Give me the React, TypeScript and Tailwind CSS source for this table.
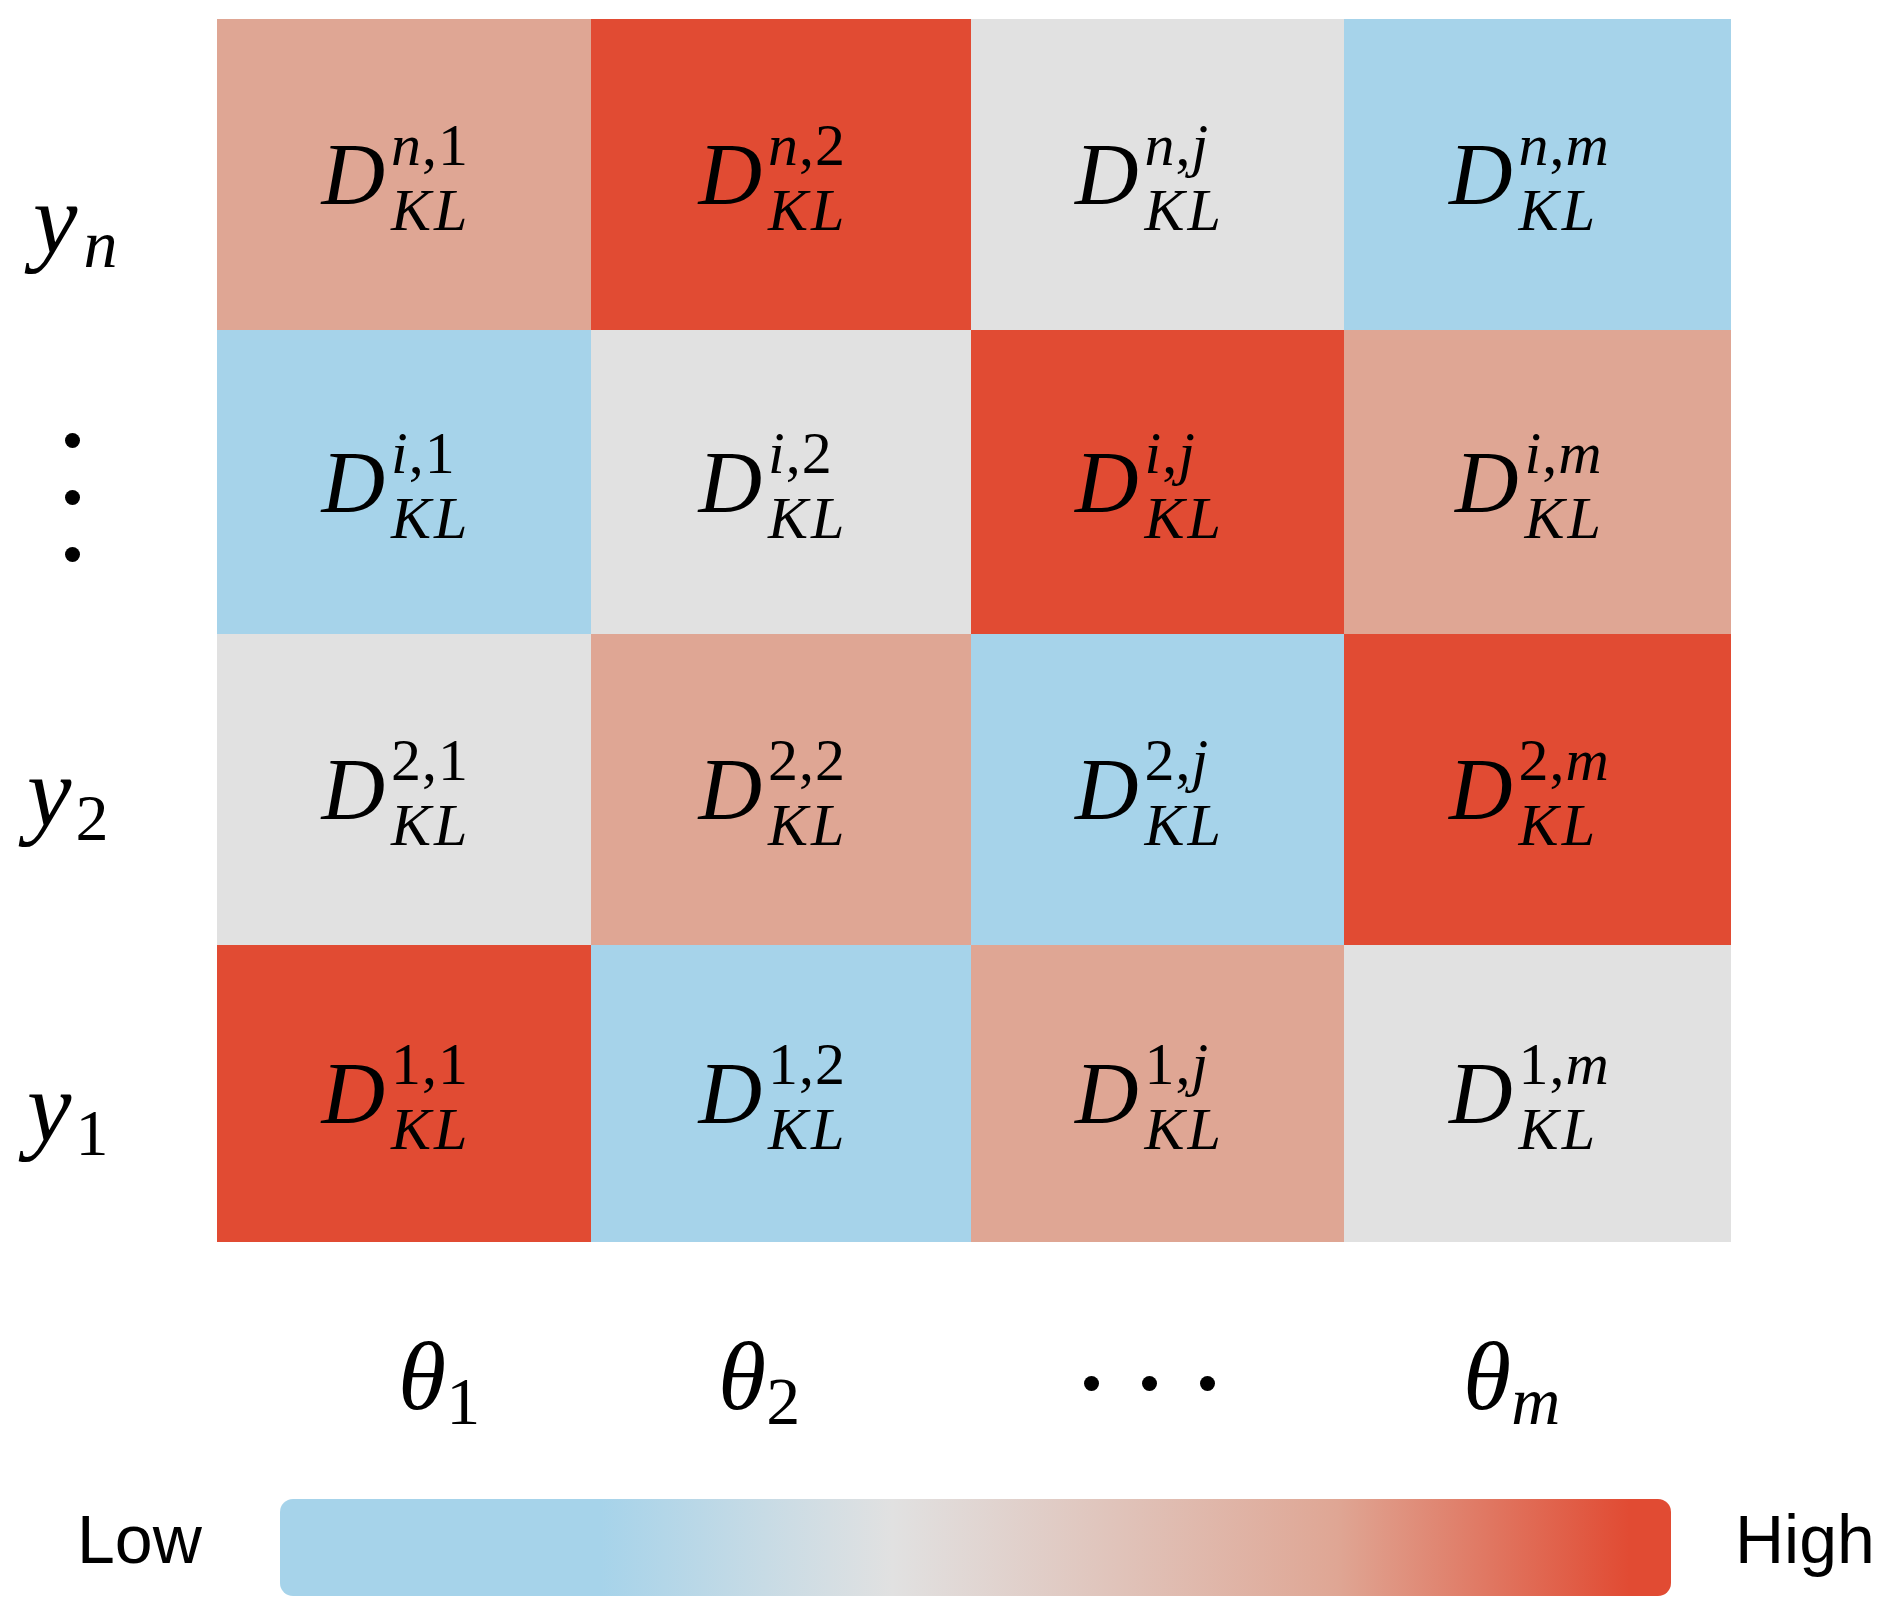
const RED = 'bg-[#e14b33]';
const SALMON = 'bg-[#dfa694]';
const GRAY = 'bg-[#e1e1e1]';
const BLUE = 'bg-[#a6d3ea]';

// heatmap rows, top (n) to bottom (1)
const rows = [
  { key: 'n', colors: [SALMON, RED, GRAY, BLUE] },
  { key: 'i', colors: [BLUE, GRAY, RED, SALMON] },
  { key: '2', colors: [GRAY, SALMON, BLUE, RED] },
  { key: '1', colors: [RED, BLUE, SALMON, GRAY] },
];
const cols = ['1', '2', 'j', 'm'];

// digits and commas are upright in math mode, letters italic
function Tok({ s }: { s: string }) {
  const upright = /[0-9,]/.test(s);
  return <span className={upright ? 'not-italic' : 'italic'}>{s}</span>;
}

function Cell({ sup, bg }: { sup: string[]; bg: string }) {
  return (
    <div className={`${bg} flex items-center justify-center pt-[6px] pr-[16px]`}>
      <div className="whitespace-nowrap text-[88px] leading-[88px]">
        <span className="italic">D</span>
        <span className="inline-flex flex-col align-[39px] ml-[6px] gap-[5px] text-[60px] leading-[60px] tracking-[1px]">
          <span>
            {sup.map((s, i) => (
              <Tok key={i} s={s} />
            ))}
          </span>
          <span className="italic tracking-[3px]">KL</span>
        </span>
      </div>
    </div>
  );
}

function Dot() {
  return <div className="w-[15px] h-[15px] rounded-full bg-black" />;
}

export default function App() {
  return (
    <div className="w-[1892px] h-[1615px] bg-white text-black overflow-hidden font-['Liberation_Serif','DejaVu_Serif',serif]">
      <div className="flex pt-[19px]">
        {/* row labels */}
        <div className="w-[217px] flex flex-col">
          <div className="h-[311px] pt-[152px] pl-[33px]">
            <div className="whitespace-nowrap text-[100px] leading-[98px] italic">
              y<span className="ml-[6px] text-[68px] leading-none align-[-14px]">n</span>
            </div>
          </div>
          <div className="h-[304px] pt-[103px] pl-[65px] flex flex-col gap-[42px]">
            <Dot />
            <Dot />
            <Dot />
          </div>
          <div className="h-[311px] pt-[110px] pl-[27px]">
            <div className="whitespace-nowrap text-[100px] leading-[98px] italic">
              y<span className="ml-[4px] not-italic text-[66px] leading-none align-[-14px]">2</span>
            </div>
          </div>
          <div className="h-[297px] pt-[114px] pl-[27px]">
            <div className="whitespace-nowrap text-[100px] leading-[98px] italic">
              y<span className="ml-[4px] not-italic text-[66px] leading-none align-[-14px]">1</span>
            </div>
          </div>
        </div>

        {/* heatmap */}
        <div className="grid grid-cols-[374px_380px_373px_387px] grid-rows-[311px_304px_311px_297px]">
          {rows.map((r) =>
            r.colors.map((bg, c) => <Cell key={r.key + c} sup={[r.key, ',', cols[c]]} bg={bg} />)
          )}
        </div>
      </div>

      {/* column labels */}
      <div className="flex items-start mt-[85px] pl-[398px] text-[98px] leading-[98px]">
        <div className="w-[320px] whitespace-nowrap italic">
          θ<span className="not-italic text-[68px] leading-none align-[-15px]">1</span>
        </div>
        <div className="w-[366px] whitespace-nowrap italic">
          θ<span className="not-italic text-[68px] leading-none align-[-15px]">2</span>
        </div>
        <div className="w-[379px] h-[98px] pt-[49px] flex items-start gap-[43px]">
          <Dot />
          <Dot />
          <Dot />
        </div>
        <div className="whitespace-nowrap italic">
          θ<span className="text-[68px] leading-none align-[-15px] tracking-[2px]">m</span>
        </div>
      </div>

      {/* colour scale */}
      <div className="flex items-start mt-[64px] pl-[77px] font-['Liberation_Sans',Arial,sans-serif] text-[68px] leading-[68px]">
        <div className="w-[203px] mt-[6px]">Low</div>
        <div className="w-[1391px] h-[97px] rounded-[13px] bg-[linear-gradient(to_right,#a6d3ea_0%,#a6d3ea_23%,#e1e1e1_44%,#dfa694_76%,#e14b33_97%,#e14b33_100%)]" />
        <div className="ml-[64px] mt-[6px]">High</div>
      </div>
    </div>
  );
}
